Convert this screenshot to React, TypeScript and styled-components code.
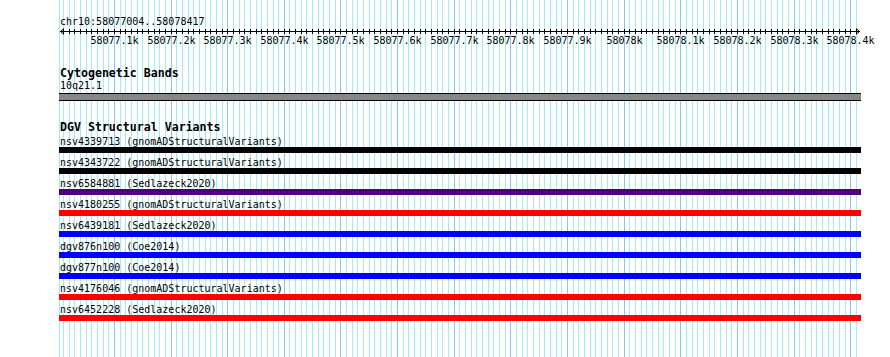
import React from 'react';
import styled, { createGlobalStyle } from 'styled-components';

const START = 58077004;
const END = 58078417;
const SCALE = 0.5665;
const PANEL_W = 802;
const PANEL_H = 357;

// pixel offset inside the panel for a base position
const bpX = (bp: number) => Math.round(0.5 + (bp - START) * SCALE);

const ticks: { bp: number; major: boolean }[] = [];
for (let bp = Math.ceil(START / 10) * 10; bp <= END; bp += 10) {
  ticks.push({ bp, major: bp % 100 === 0 });
}

const labelFor = (bp: number) => {
  const k = bp / 1000;
  return `${Number.isInteger(k) ? k : k.toFixed(1)}k`;
};

const variants = [
  { name: 'nsv4339713', study: 'gnomADStructuralVariants', color: '#000000' },
  { name: 'nsv4343722', study: 'gnomADStructuralVariants', color: '#000000' },
  { name: 'nsv6584881', study: 'Sedlazeck2020', color: '#4b0082' },
  { name: 'nsv4180255', study: 'gnomADStructuralVariants', color: '#ff0000' },
  { name: 'nsv6439181', study: 'Sedlazeck2020', color: '#0000ff' },
  { name: 'dgv876n100', study: 'Coe2014', color: '#0000ff' },
  { name: 'dgv877n100', study: 'Coe2014', color: '#0000ff' },
  { name: 'nsv4176046', study: 'gnomADStructuralVariants', color: '#ff0000' },
  { name: 'nsv6452228', study: 'Sedlazeck2020', color: '#ff0000' },
];

const GlobalStyle = createGlobalStyle`
  html, body {
    margin: 0;
    padding: 0;
    background: #ffffff;
  }
  body {
    font-family: "DejaVu Sans Mono", "Liberation Mono", monospace;
    color: #000;
  }
`;

const Page = styled.div`
  width: 890px;
  height: ${PANEL_H}px;
  overflow: hidden;
  background: #fff;
`;

const Panel = styled.div`
  position: relative;
  margin-left: 59px;
  width: ${PANEL_W}px;
  height: ${PANEL_H}px;
  display: flex;
  flex-direction: column;
`;

const Grid = styled.svg`
  position: absolute;
  left: 0;
  top: 0;
  z-index: 0;
`;

const Ruler = styled.div`
  position: relative;
  z-index: 1;
  padding-top: 16px;
  display: flex;
  flex-direction: column;
`;

const Location = styled.div`
  font-size: 10px;
  line-height: 11px;
  height: 11px;
  padding-left: 1px;
  white-space: pre;
`;

const Axis = styled.svg`
  display: block;
`;

const ScaleLabels = styled.div`
  position: relative;
  height: 11px;
  font-size: 10px;
  line-height: 11px;
`;

const ScaleLabel = styled.span`
  position: absolute;
  top: 0;
  transform: translateX(-50%);
  white-space: pre;
`;

const Track = styled.section<{ $gap: number }>`
  position: relative;
  z-index: 1;
  margin-top: ${({ $gap }) => $gap}px;
  display: flex;
  flex-direction: column;
`;

const TrackTitle = styled.div`
  font-size: 11.6px;
  font-weight: bold;
  line-height: 13px;
  height: 13px;
  padding-left: 1px;
  white-space: pre;
`;

const FeatureLabel = styled.div`
  font-size: 10px;
  line-height: 11px;
  height: 11px;
  padding-left: 1px;
  white-space: pre;
`;

const BandBar = styled.div`
  margin-top: 2px;
  height: 6px;
  background: #878787;
  border-top: 1px solid #000;
  border-bottom: 1px solid #000;
`;

const Rows = styled.div`
  margin-top: 2px;
  display: flex;
  flex-direction: column;
  gap: 4px;
`;

const Row = styled.div`
  display: flex;
  flex-direction: column;
`;

const VariantBar = styled.div<{ $color: string }>`
  height: 6px;
  background: ${({ $color }) => $color};
`;

const App = () => (
  <Page>
    <GlobalStyle />
    <Panel>
      <Grid width={PANEL_W} height={PANEL_H} shapeRendering="crispEdges">
        <line x1={0.5} x2={0.5} y1={0} y2={PANEL_H} stroke="#a4ecf0" />
        {ticks.map(({ bp, major }) => (
          <line
            key={bp}
            x1={bpX(bp) + 0.5}
            x2={bpX(bp) + 0.5}
            y1={0}
            y2={PANEL_H}
            stroke={major ? '#86c6f0' : '#a4ecf0'}
          />
        ))}
      </Grid>

      <Ruler>
        <Location>chr10:58077004..58078417</Location>
        <Axis width={PANEL_W} height={8} shapeRendering="crispEdges">
          <line x1={1} x2={PANEL_W - 1} y1={4.5} y2={4.5} stroke="#000" />
          <polyline points="5,1.5 1.5,4.5 5,7.5" fill="none" stroke="#000" shapeRendering="auto" />
          <polyline
            points={`${PANEL_W - 5},1.5 ${PANEL_W - 1.5},4.5 ${PANEL_W - 5},7.5`}
            fill="none"
            stroke="#000"
            shapeRendering="auto"
          />
          {ticks.map(({ bp }) => (
            <line key={bp} x1={bpX(bp) + 0.5} x2={bpX(bp) + 0.5} y1={2} y2={7} stroke="#000" />
          ))}
        </Axis>
        <ScaleLabels>
          {ticks
            .filter((t) => t.major)
            .map(({ bp }) => (
              <ScaleLabel key={bp} style={{ left: bpX(bp) + 0.5 }}>
                {labelFor(bp)}
              </ScaleLabel>
            ))}
        </ScaleLabels>
      </Ruler>

      <Track $gap={21}>
        <TrackTitle>Cytogenetic Bands</TrackTitle>
        <FeatureLabel>10q21.1</FeatureLabel>
        <BandBar />
      </Track>

      <Track $gap={20}>
        <TrackTitle>DGV Structural Variants</TrackTitle>
        <Rows>
          {variants.map((v) => (
            <Row key={v.name}>
              <FeatureLabel>{`${v.name} (${v.study})`}</FeatureLabel>
              <VariantBar $color={v.color} />
            </Row>
          ))}
        </Rows>
      </Track>
    </Panel>
  </Page>
);

export default App;
